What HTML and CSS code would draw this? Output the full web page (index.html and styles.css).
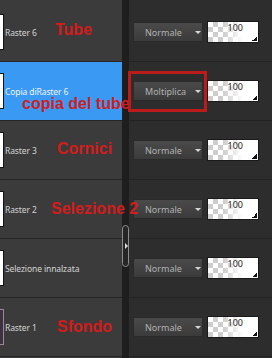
FILE: index.html
```html
<!DOCTYPE html>
<html>
<head>
<meta charset="utf-8">
<link rel="stylesheet" href="styles.css">
</head>
<body>
<div class="panel">
  <div class="layers">
    <div class="layer"><span class="thumb"></span><span class="name">Raster 6</span><span class="note n-tube">Tube</span></div>
    <div class="layer selected"><span class="thumb"></span><span class="name">Copia diRaster 6</span><span class="note n-copia">copia del tube</span></div>
    <div class="layer"><span class="thumb"></span><span class="name">Raster 3</span><span class="note n-cornici">Cornici</span></div>
    <div class="layer"><span class="thumb"></span><span class="name">Raster 2</span><span class="note n-sel">Selezione 2</span></div>
    <div class="layer"><span class="thumb"></span><span class="name">Selezione innalzata</span></div>
    <div class="layer"><span class="thumb thumb-bg"></span><span class="name">Raster 1</span><span class="note n-sfondo">Sfondo</span></div>
  </div>
  <div class="splitter">
    <div class="handle"><span class="grip-arrow"></span></div>
  </div>
  <div class="props">
    <div class="prop"><div class="blend">Normale<span class="caret"></span></div><div class="opacity">100</div></div>
    <div class="prop"><span class="mark"></span><div class="blend">Moltiplica<span class="caret"></span></div><div class="opacity">100</div></div>
    <div class="prop"><div class="blend">Normale<span class="caret"></span></div><div class="opacity">100</div></div>
    <div class="prop"><div class="blend">Normale<span class="caret"></span></div><div class="opacity">100</div></div>
    <div class="prop"><div class="blend">Normale<span class="caret"></span></div><div class="opacity">100</div></div>
    <div class="prop"><div class="blend">Normale<span class="caret"></span></div><div class="opacity">100</div></div>
  </div>
</div>
</body>
</html>
```

FILE: styles.css
```css
html, body {
  margin: 0;
  padding: 0;
}
body {
  width: 272px;
  height: 358px;
  overflow: hidden;
  background: #2d2d2d;
  font-family: "Noto Sans", "Open Sans", sans-serif;
}
.panel {
  display: flex;
  height: 358px;
}
.layers {
  width: 122px;
  flex: none;
  background: #3b3b3b;
  padding-top: 3px;
}
.layer {
  position: relative;
  height: 58px;
  border-bottom: 1px solid #262626;
  display: flex;
  align-items: center;
  gap: 1px;
  background: #3b3b3b;
}
.layer.selected {
  background: #3a99f2;
}
.thumb {
  flex: none;
  width: 34px;
  height: 34px;
  margin-left: -32px;
  background: #fff;
  border: 1px solid #141414;
}
.thumb-bg {
  background: #3e3240;
  border-color: #9a8699;
}
.name {
  font-size: 8.5px;
  letter-spacing: -0.1px;
  color: #d4d4d4;
  white-space: nowrap;
}
.selected .name {
  color: #eef4fc;
}
.note {
  position: absolute;
  z-index: 2;
  font: bold 16px/16px "Liberation Sans", Arial, sans-serif;
  color: #d41c1c;
  white-space: nowrap;
}
.n-tube { left: 55px; top: 19px; }
.n-copia { left: 22px; top: 34px; }
.n-cornici { left: 57px; top: 20px; }
.n-sel { left: 51px; top: 21px; }
.n-sfondo { left: 57px; top: 21px; }

.splitter {
  width: 7px;
  flex: none;
  background: #1e1e1e;
  padding-top: 225px;
}
.handle {
  box-sizing: border-box;
  width: 7px;
  height: 42px;
  border: 1px solid #8e8e8e;
  border-radius: 4px;
  background: #262626;
  display: flex;
  align-items: center;
}
.grip-arrow {
  width: 0;
  height: 0;
  margin-left: 2px;
  border-left: 3px solid #dcdcdc;
  border-top: 3px solid transparent;
  border-bottom: 3px solid transparent;
}

.props {
  flex: 1;
  background: #2d2d2d;
  padding-top: 3px;
}
.prop {
  position: relative;
  height: 58px;
  border-bottom: 1px solid #232323;
  display: flex;
  align-items: center;
  gap: 4px;
  padding-left: 4px;
}
.blend {
  box-sizing: border-box;
  width: 70px;
  height: 20px;
  display: flex;
  align-items: center;
  padding-left: 11px;
  border: 1px solid #2a2a2a;
  border-radius: 1px;
  background: linear-gradient(#4a4a4a, #3b3b3b);
  color: #b2b2b2;
  font-size: 9px;
  white-space: nowrap;
}
.caret {
  margin-left: auto;
  margin-right: 1px;
  width: 0;
  height: 0;
  border-left: 3px solid transparent;
  border-right: 3px solid transparent;
  border-top: 3px solid #d8d8d8;
}
.opacity {
  position: relative;
  box-sizing: border-box;
  width: 52px;
  height: 22px;
  border: 1px solid #1a1a1a;
  padding-right: 15px;
  text-align: right;
  font-size: 9px;
  line-height: 12px;
  color: #1e1e1e;
  background:
    linear-gradient(to right, rgba(255,255,255,0) 0, rgba(255,255,255,0) 30%, #fff 70%),
    conic-gradient(#cdcdcd 25%, #fff 0 50%, #cdcdcd 0 75%, #fff 0) 0 0 / 10px 10px;
}
.opacity::after {
  content: "";
  position: absolute;
  right: 1px;
  bottom: 1px;
  width: 5px;
  height: 5px;
  background: linear-gradient(135deg, transparent 50%, #111 50%);
}
.mark {
  position: absolute;
  z-index: 2;
  left: -1px;
  top: 9px;
  box-sizing: border-box;
  width: 79px;
  height: 41px;
  border: 3px solid #bc1b1b;
}
```
